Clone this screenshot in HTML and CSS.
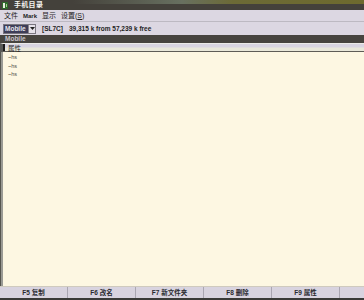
FILE: index.html
```html
<!DOCTYPE html>
<html>
<head>
<meta charset="utf-8">
<link rel="stylesheet" href="styles.css">
</head>
<body>
<div class="win">
  <div class="title">
    <svg class="ico" width="6" height="7" viewBox="0 0 6 7"><rect x="0" y="0" width="6" height="7" fill="#2f6a2a"/><rect x="1" y="1" width="2" height="5" fill="#e8f0e0"/><rect x="4" y="2" width="1" height="3" fill="#9fd08a"/></svg>
    <span class="ttext">手机目录</span>
  </div>
  <div class="menu">
    <span>文件</span><span class="mk">Mark</span><span>显示</span><span>设置(<u>S</u>)</span>
  </div>
  <div class="toolbar">
    <div class="select"><span class="selval">Mobile</span><span class="arrow"><svg width="5" height="3" viewBox="0 0 5 3"><path d="M0 0H5L2.5 3Z" fill="#222"/></svg></span></div>
    <span class="info">[SL7C]</span>
    <span class="info">39,315 k from 57,239 k free</span>
  </div>
  <div class="pathbar">Mobile</div>
  <div class="colhead"><span class="cmark"></span><span>属性</span></div>
  <div class="list">
    <div class="item">~hs</div>
    <div class="item">~hs</div>
    <div class="item">~hs</div>
  </div>
  <div class="footer">
    <div class="fk">F5 复制</div>
    <div class="fk">F6 改名</div>
    <div class="fk">F7 新文件夹</div>
    <div class="fk">F8 删除</div>
    <div class="fk">F9 属性</div>
    <div class="fend"></div>
  </div>
</div>
</body>
</html>
```
FILE: styles.css
```css
html, body {
  margin: 0;
  padding: 0;
  background: #fdf7e2;
}
body {
  font-family: "Liberation Sans", "Noto Sans CJK SC", sans-serif;
}
.win {
  width: 364px;
  height: 300px;
  display: flex;
  flex-direction: column;
  overflow: hidden;
}
.title {
  height: 10px;
  flex: none;
  position: relative;
  background: #44413b;
  display: flex;
  align-items: center;
  padding-left: 1px;
  box-sizing: border-box;
}
.title::before {
  content: "";
  position: absolute;
  left: 0;
  top: 0;
  right: 0;
  height: 4px;
  background: linear-gradient(to right, rgba(68,65,59,0) 20%, #687060 50%, #6c6a36 64%, #6e6a2e 100%);
}
.ico {
  position: relative;
  margin-left: 1px;
}
.ttext {
  position: relative;
  margin-left: 6px;
  color: #f4f4f0;
  font-size: 7px;
  font-weight: bold;
  line-height: 10px;
  letter-spacing: 0.3px;
}
.menu {
  height: 12px;
  flex: none;
  box-sizing: border-box;
  background: #dcd7e2;
  border-bottom: 1px solid #bdb9c2;
  display: flex;
  align-items: baseline;
  gap: 5px;
  padding-left: 4px;
  padding-top: 1px;
  font-size: 7px;
  line-height: 10px;
  color: #1e1e1e;
}
.menu .mk {
  font-weight: bold;
  font-size: 6px;
}
.toolbar {
  height: 13px;
  flex: none;
  box-sizing: border-box;
  background: #dcd7e2;
  display: flex;
  align-items: center;
  padding-left: 3px;
  gap: 6px;
}
.select {
  width: 33px;
  height: 10px;
  box-sizing: border-box;
  border: 1px solid #7a7680;
  background: #f4f2f6;
  display: flex;
  align-items: stretch;
}
.selval {
  width: 24px;
  background: #3e3d58;
  color: #e8e8f0;
  font-size: 6.5px;
  font-weight: bold;
  line-height: 8px;
  padding-left: 1px;
  box-sizing: border-box;
}
.arrow {
  margin-left: auto;
  width: 6px;
  border-left: 1px solid #8a8690;
  background: #e6e2ea;
  display: flex;
  align-items: center;
  justify-content: center;
}
.info {
  font-size: 6.5px;
  font-weight: bold;
  color: #1e1e24;
}
.pathbar {
  height: 8px;
  flex: none;
  background: #47443f;
  color: #c9c5cc;
  font-size: 6.5px;
  font-weight: bold;
  line-height: 8px;
  padding-left: 5px;
}
.colhead {
  height: 9px;
  flex: none;
  box-sizing: border-box;
  background: linear-gradient(to bottom, #d9d5e1 0%, #d9d5e1 45%, #e9e8da 55%, #e9e8da 100%);
  border-top: 1px solid #ecebe8;
  border-bottom: 1px solid #5e5c56;
  border-left: 3px solid #5a5a58;
  display: flex;
  align-items: center;
  font-size: 6.5px;
  color: #222;
}
.cmark {
  width: 2px;
  height: 7px;
  background: #1a1a1a;
  margin-right: 3px;
}
.list {
  flex: 1;
  background: #fdf7e2;
  border-left: 1px solid #55554f;
  box-shadow: inset 2px 0 0 #9a9a94;
  padding-top: 1px;
  padding-left: 7px;
}
.item {
  font-size: 5.5px;
  line-height: 8.5px;
  color: #505048;
}
.footer {
  height: 14px;
  flex: none;
  box-sizing: border-box;
  background: #d8d3df;
  border-top: 1px solid #cfcabe;
  border-bottom: 2px solid #3a3a38;
  display: flex;
}
.fk {
  width: 68px;
  flex: none;
  box-sizing: border-box;
  border-right: 1px solid #aaa6b2;
  text-align: center;
  font-size: 6.5px;
  font-weight: bold;
  line-height: 11px;
  color: #2a2a30;
}
.fend {
  flex: 1;
}
```
